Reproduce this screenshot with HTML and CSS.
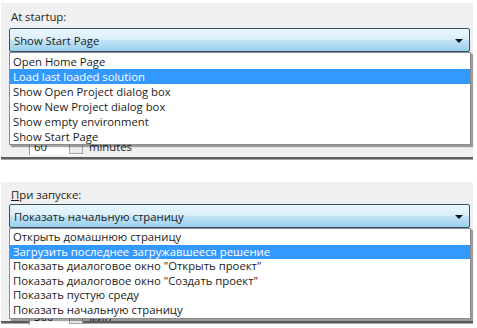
FILE: index.html
```html
<!DOCTYPE html>
<html lang="en">

<head>
    <meta charset="UTF-8">
    <title>At startup</title>
    <link rel="stylesheet" href="styles.css">
</head>

<body>
    <main class="page">
        <section class="panel panel-en">
            <div class="caption">At startup:</div>
            <div class="combo">
                <div class="combo-box">
                    <span>Show Start Page</span>
                    <span class="arrow"></span>
                </div>
                <ul class="droplist">
                    <li>Open Home Page</li>
                    <li class="selected">Load last loaded solution</li>
                    <li>Show Open Project dialog box</li>
                    <li>Show New Project dialog box</li>
                    <li>Show empty environment</li>
                    <li>Show Start Page</li>
                </ul>
            </div>
            <div class="spin-row">
                <div class="spin"><span class="spin-value">60</span><span class="spin-btn"></span></div>
                <span class="spin-unit">minutes</span>
            </div>
        </section>

        <section class="panel panel-ru">
            <div class="caption"><u>П</u>ри запуске:</div>
            <div class="combo">
                <div class="combo-box">
                    <span>Показать начальную страницу</span>
                    <span class="arrow"></span>
                </div>
                <ul class="droplist">
                    <li>Открыть домашнюю страницу</li>
                    <li class="selected">Загрузить последнее загружавшееся решение</li>
                    <li>Показать диалоговое окно "Открыть проект"</li>
                    <li>Показать диалоговое окно "Создать проект"</li>
                    <li>Показать пустую среду</li>
                    <li>Показать начальную страницу</li>
                </ul>
            </div>
            <div class="spin-row">
                <div class="spin"><span class="spin-value">300</span><span class="spin-btn"></span></div>
                <span class="spin-unit">мин</span>
            </div>
        </section>
    </main>
</body>

</html>
```

FILE: styles.css
```css
* {
    margin: 0;
    padding: 0;
    box-sizing: border-box;
}

body {
    font-family: "Open Sans", "Noto Sans", sans-serif;
    font-size: 11.3px;
    color: #1c1c1c;
    background: #fff;
    width: 477px;
    height: 328px;
    overflow: hidden;
}

.page {
    padding-top: 3px;
    display: flex;
    flex-direction: column;
    gap: 23px;
}

.panel {
    background: #f0f0f0;
    border-bottom: 2px solid #5e5e5e;
    box-shadow: 0 1px 0 #a8a8a8;
    padding: 4px 8px 0 8px;
    margin-right: 4px;
    margin-left: 1px;
}

.panel-en {
    height: 156px;
}

.panel-ru {
    height: 141px;
    padding-top: 6px;
}

.caption {
    line-height: 19px;
    padding-left: 2px;
}

.panel-ru .caption {
    line-height: 14px;
}

.combo {
    position: relative;
    margin-top: 2px;
    width: 461px;
}

.combo-box {
    height: 24px;
    border: 1px solid #3b4f60;
    border-radius: 2px;
    background: linear-gradient(to bottom, #eaf6fd 0%, #dcf0fb 45%, #bfe3f7 55%, #9ccfec 100%);
    display: flex;
    align-items: center;
    justify-content: space-between;
    padding: 0 6px 0 4px;
}

.arrow {
    width: 0;
    height: 0;
    border-left: 4px solid transparent;
    border-right: 4px solid transparent;
    border-top: 4px solid #111;
    margin-top: 1px;
}

.droplist {
    list-style-type: none;
    position: absolute;
    top: 24px;
    left: 0;
    width: 462px;
    background: #fff;
    border: 1px solid #8c8c8c;
    box-shadow: 2px 2px 1px rgba(0, 0, 0, .35);
    padding-top: 1px;
    z-index: 2;
}

.droplist li {
    line-height: 15px;
    padding-left: 3px;
    white-space: nowrap;
}

.panel-ru .droplist li {
    line-height: 14.6px;
}

.droplist li.selected {
    background: #3399ff;
    color: #fff;
}

.spin-row {
    display: flex;
    align-items: center;
    gap: 6px;
    margin-top: 86px;
    padding-left: 20px;
}

.panel-ru .spin-row {
    margin-top: 80px;
}

.spin {
    display: flex;
    align-items: center;
    width: 54px;
    height: 17px;
    background: #fff;
    border-left: 1px solid #9a9a9a;
    padding-left: 4px;
    justify-content: space-between;
}

.spin-btn {
    width: 14px;
    height: 15px;
    border: 1px solid #a0a0a0;
    background: #ececec;
}
```
